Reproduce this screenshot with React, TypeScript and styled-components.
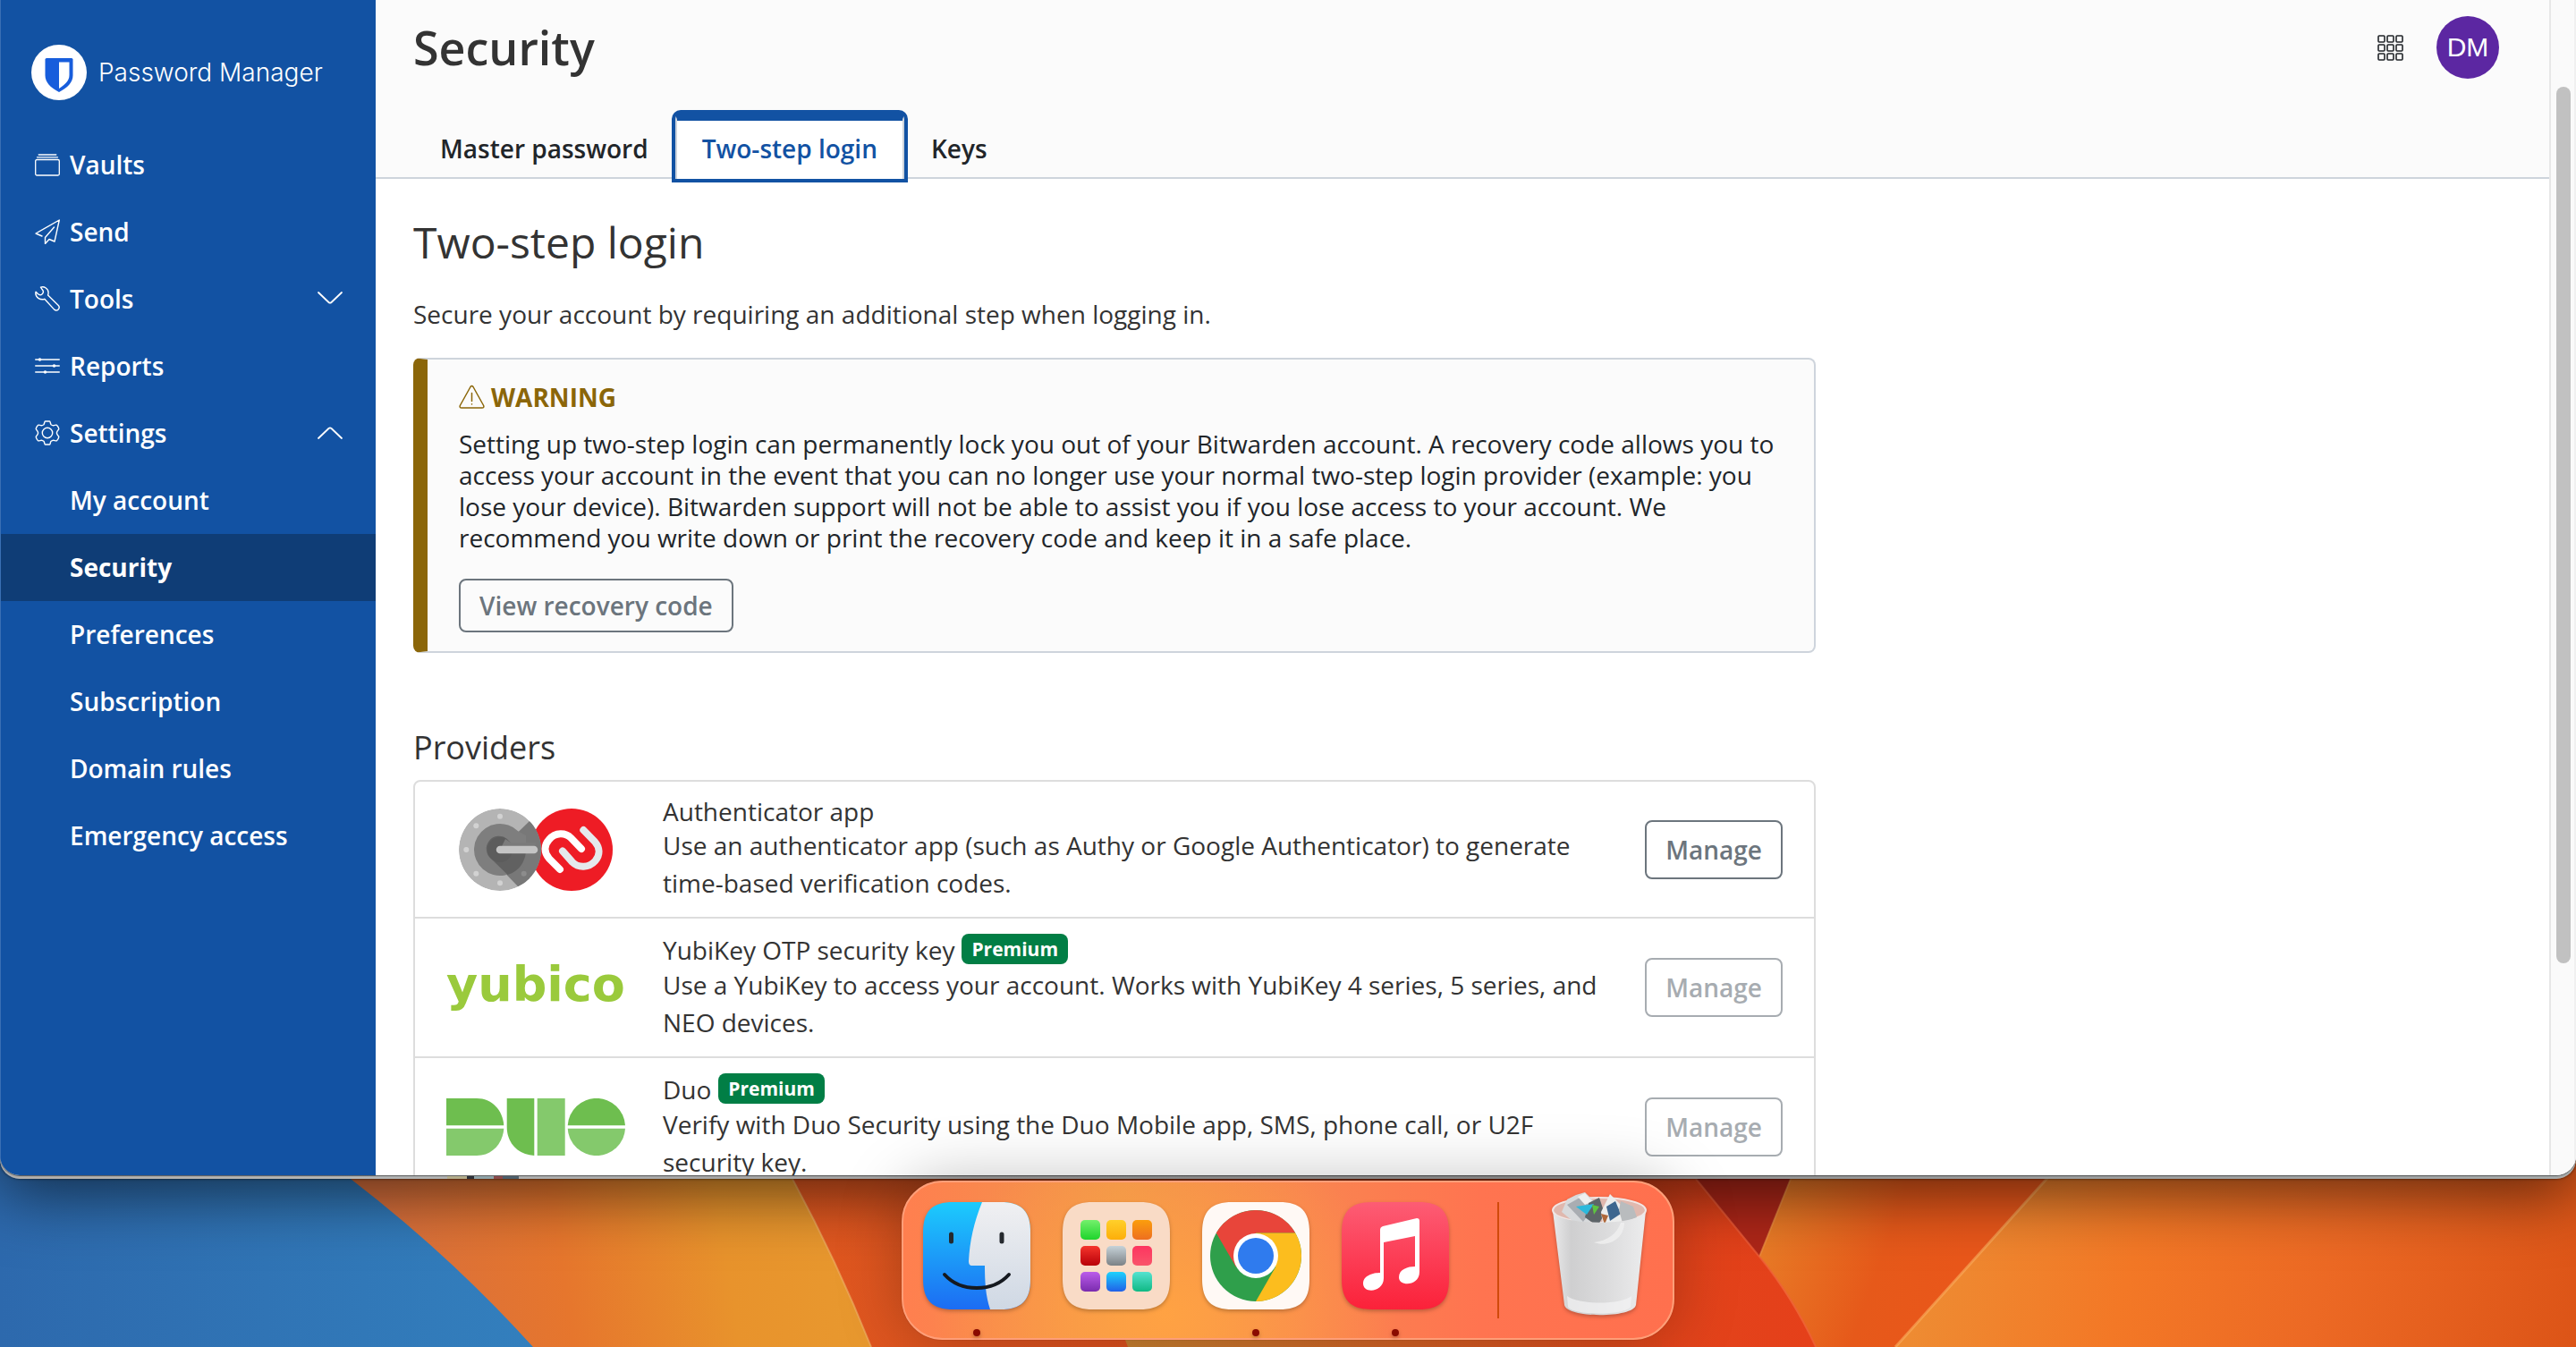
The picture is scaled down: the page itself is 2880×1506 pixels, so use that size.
import React from "react";
import styled, { createGlobalStyle } from "styled-components";

const sans = '"Open Sans", "Noto Sans", sans-serif';
const brand = "#1252a3";
const brandDark = "#0f3d76";
const muted = "#6c757d";
const line = "#ced4dc";

const GlobalStyle = createGlobalStyle`
  *, *::before, *::after { box-sizing: border-box; }
  body { margin: 0; font-family: ${sans}; font-size: 28px; line-height: 42px; color: #333; overflow: hidden; }
  h1, h2, h3, p, ul { margin: 0; padding: 0; font-size: 28px; font-weight: 400; }
  ul { list-style: none; }
  button { font: inherit; color: inherit; background: none; border: 0; margin: 0; padding: 0; }
  a { color: inherit; text-decoration: none; }
  svg { display: block; flex: none; }
`;

/* ---------- desktop ---------- */

const Desktop = styled.div`
  position: relative;
  height: 100vh;
  display: flex;
  flex-direction: column;
  background: #e06024;
  overflow: hidden;
`;

const WallpaperArt = styled.svg`
  position: absolute;
  left: 0;
  bottom: 0;
  width: 100%;
  height: 240px;
`;

const WindowStack = styled.div`
  flex: 1;
  min-height: 0;
  display: flex;
  position: relative;
  padding-bottom: 4px;
  background: linear-gradient(90deg, #b0aeac 0, #b4b6b6 400px, #a2a2a2 1000px, #929292 1900px, #a8acac 100%);
  border-radius: 0 0 22px 22px;
  box-shadow: 0 16px 72px rgba(0, 0, 0, 0.6), 0 0 3px rgba(0, 0, 0, 0.7);
  &::after {
    content: "";
    position: absolute;
    left: 500px;
    bottom: 0;
    width: 80px;
    height: 3px;
    background: linear-gradient(90deg, #b3ad8c 0 22px, #2c3038 22px 30px, #8fa3a8 30px 52px, #8a4a4c 52px 62px, #4d5f6c 62px);
  }
`;

const BrowserWindow = styled.div`
  flex: 1;
  min-width: 0;
  display: flex;
  overflow: hidden;
  background: #fff;
  border-radius: 0 0 22px 22px;
  box-shadow: 0 1px 1px rgba(0, 0, 0, 0.5);
`;

/* ---------- sidebar ---------- */

const Sidebar = styled.nav`
  flex: none;
  width: 420px;
  background: ${brand};
  color: #fff;
  border-left: 1px solid #3a6fb3;
`;

const Brand = styled.a`
  display: flex;
  align-items: center;
  gap: 13px;
  height: 147px;
  padding: 14px 34px 0;
  font-family: Inter, sans-serif;
  font-weight: 300;
  font-size: 28px;
  white-space: nowrap;
`;

const navRow = `
  display: flex;
  align-items: center;
  gap: 11px;
  width: 100%;
  height: 75px;
  font-weight: 600;
  text-align: left;
`;

const NavLink = styled.a`
  ${navRow}
  padding: 0 37px 1px 38px;
`;

const NavToggle = styled.button`
  ${navRow}
  padding: 0 37px 1px 38px;
`;

const NavLabel = styled.span`
  flex: 1;
`;

const SubLink = styled.a<{ $active?: boolean }>`
  ${navRow}
  padding: 0 0 1px 77px;
  font-weight: ${(p) => (p.$active ? 700 : 600)};
  background: ${(p) => (p.$active ? brandDark : "transparent")};
`;

/* ---------- main column ---------- */

const Main = styled.main`
  flex: 1;
  min-width: 0;
  overflow: hidden;
`;

const Header = styled.header`
  background: #fbfbfb;
  border-bottom: 2px solid ${line};
  padding: 18px 56px 0 42px;
`;

const TitleRow = styled.div`
  display: flex;
  align-items: center;
  height: 70px;
`;

const PageTitle = styled.h1`
  flex: 1;
  font-weight: 600;
  font-size: 52px;
  line-height: 70px;
`;

const AppsButton = styled.button`
  margin-right: 37px;
`;

const Avatar = styled.button`
  width: 70px;
  height: 70px;
  border-radius: 50%;
  background: #5c27a2;
  color: #fff;
  font-family: "Liberation Sans", Arial, sans-serif;
  font-size: 30px;
`;

const Tabs = styled.div`
  display: flex;
  margin: 39px 0 -2px;
`;

const Tab = styled.a<{ $active?: boolean }>`
  height: 73px;
  padding: 10px 28px 0;
  border: 2px solid transparent;
  border-top: 8px solid transparent;
  border-bottom: 0;
  border-radius: 6px 6px 0 0;
  font-weight: 600;
  color: #212529;
  ${(p) =>
    p.$active &&
    `
    color: ${brand};
    background: #fff;
    border-color: ${brand} ${line};
    box-shadow: 0 0 0 4px ${brand};
  `}
`;

const Content = styled.div`
  padding: 36px 42px;
  max-width: 1652px;
`;

const SectionTitle = styled.h2`
  font-size: 48px;
  line-height: 70px;
`;

const Lead = styled.p`
  margin-top: 24px;
`;

const Callout = styled.section`
  margin-top: 28px;
  padding: 22px 35px 21px;
  background: #fbfbfb;
  color: #212529;
  border: 2px solid ${line};
  border-left: 16px solid #8b6609;
  border-radius: 8px;
`;

const CalloutTitle = styled.h3`
  display: flex;
  align-items: center;
  gap: 7px;
  font-weight: 700;
  line-height: 40px;
  color: #8b6609;
`;

const CalloutText = styled.p`
  margin: 15px 0 28px;
  line-height: 35px;
`;

const OutlineButton = styled.button<{ $tall?: boolean }>`
  height: ${(p) => (p.$tall ? 66 : 60)}px;
  padding: 0 21px;
  border: 2px solid ${muted};
  border-radius: 8px;
  color: ${muted};
  font-weight: 600;
  white-space: nowrap;
  &:disabled {
    color: #a7acb1;
    border-color: #a7acb1;
  }
`;

const ProvidersTitle = styled.h2`
  margin-top: 80px;
  font-size: 36px;
  line-height: 52px;
`;

const ProviderList = styled.ul`
  margin-top: 10px;
  border: 2px solid #ddd;
  border-radius: 8px;
`;

const Provider = styled.li`
  display: flex;
  align-items: center;
  padding: 17px 35px;
  & + & {
    border-top: 2px solid #ddd;
  }
`;

const LogoCell = styled.div`
  flex: none;
  width: 200px;
  display: flex;
  justify-content: center;
`;

const ProviderText = styled.div`
  flex: 1;
  min-width: 0;
  padding: 0 42px;
`;

const ProviderName = styled.h3<{ $badge?: boolean }>`
  display: flex;
  align-items: flex-start;
  gap: 8px;
  line-height: ${(p) => (p.$badge ? 36 : 33)}px;
`;

const Badge = styled.span`
  padding: 0 11px;
  border-radius: 8px;
  background: #017e45;
  color: #fff;
  font-size: 21px;
  line-height: 34px;
  font-weight: 700;
`;

const ScrollTrack = styled.div`
  flex: none;
  width: 30px;
  padding: 97px 0 0 6px;
  border-left: 2px solid #e7e7e7;
  border-right: 2px solid #f0f0f0;
  background: #fafafa;
`;

const ScrollThumb = styled.div`
  width: 16px;
  height: 80.5%;
  border-radius: 8px;
  background: #c1c1c1;
`;

/* ---------- dock ---------- */

const DockArea = styled.footer`
  position: relative;
  flex: none;
  display: flex;
  justify-content: center;
  padding: 2px 0 8px;
`;

const Dock = styled.div`
  display: flex;
  align-items: flex-start;
  gap: 36px;
  height: 178px;
  padding: 22px;
  border: 2px solid #ff9e78;
  border-radius: 46px;
  background:
    radial-gradient(ellipse 260px 210px at 34% 85%, #ffa243, rgba(255, 162, 67, 0)),
    linear-gradient(90deg, #ff7f4f 0, #f0974a 28%, #f98550 52%, #ff7450 75%, #ff704e 100%);
  box-shadow: 0 0 70px rgba(0, 0, 0, 0.26), 0 0 1px rgba(0, 0, 0, 0.5);
`;

const DockItem = styled.button<{ $running?: boolean }>`
  position: relative;
  width: 120px;
  height: 120px;
  filter: drop-shadow(0 2px 2px rgba(0, 0, 0, 0.25));
  &::after {
    content: "";
    display: ${(p) => (p.$running ? "block" : "none")};
    position: absolute;
    left: 56px;
    top: 142px;
    width: 8px;
    height: 8px;
    border-radius: 50%;
    background: #8a0a00;
  }
`;

const DockDivider = styled.div`
  width: 2px;
  height: 130px;
  margin: 0 16px 0 18px;
  background: #d04a0c;
`;

/* ---------- drawings ---------- */

const thin = { fill: "none", stroke: "currentColor", strokeLinecap: "round", strokeLinejoin: "round" } as const;

const ShieldLogo = () => (
  <svg width="62" height="62" viewBox="0 0 62 62">
    <circle cx="31" cy="31" r="31" fill="#fff" />
    <path d="M17 15h28a1.500 1.500 0 0 1 1.500 1.500V34c0 8-6 14-15.500 19C21.500 48 15.500 42 15.500 34V16.500A1.500 1.500 0 0 1 17 15z" fill="#175ddc" />
    <path d="M31 19.500h11.500V34c0 6-4.500 10.500-11.500 15z" fill="#fff" />
  </svg>
);

const VaultIcon = () => (
  <svg width="28" height="28" viewBox="0 0 28 28" {...thin} strokeWidth="1.300">
    <rect x="0.700" y="8.500" width="26.600" height="17.500" rx="1.500" />
    <path d="M2.500 5.800h23M4.200 3h19.600" />
  </svg>
);

const SendIcon = () => (
  <svg width="28" height="28" viewBox="0 0 28 28" {...thin} strokeWidth="1.400">
    <path d="M8 19 1 16 27.300 1 22 25l-6-2.500-4.500 5v-7L21.500 9" />
  </svg>
);

const WrenchIcon = () => (
  <svg width="28" height="28" viewBox="0 0 28 28" {...thin} strokeWidth="1.400">
    <path d="M6.500 1.200c4-1.400 8.600 1.600 8.600 6 0 1.300-.3 2-.5 2.800L26.300 21.500c2.500 3-1.300 7.200-4.600 4.600L10.800 14.300c-4.500 1.700-9.800-1.600-10-6.400 0-.8.100-1 .3-1.600l2.200 2.300c3.400 3.200 8-1.200 5-4.800z" />
  </svg>
);

const SlidersIcon = () => (
  <svg width="28" height="28" viewBox="0 0 28 28" {...thin} strokeWidth="1.300">
    <path d="M.7 7h26.600M.7 14h26.600M.7 21h26.600" />
    <g fill="currentColor" stroke="none">
      <circle cx="5.500" cy="7" r="1.800" />
      <circle cx="21.500" cy="14" r="1.800" />
      <circle cx="11.500" cy="21" r="1.800" />
    </g>
  </svg>
);

const GearIcon = () => (
  <svg width="28" height="28" viewBox="0 0 28 28" {...thin} strokeWidth="1.400">
    <circle cx="14" cy="14" r="5.700" />
    <path d="M11.500 1h5c.8 0 .8 3 1.600 3.700 1.200.9 1.600 1 2.600 1.100 1 .1 3-1.200 3.700-.6.700.700 2.200 3.300 2.400 4.200.2 1-2.300 2-2.400 4.600.1 2.600 2.600 3.600 2.400 4.600-.2.900-1.700 3.500-2.400 4.200-.7.600-2.700-.7-3.700-.6-1 .100-1.400.2-2.600 1.100-.8.700-.8 3.700-1.600 3.700h-5c-.8 0-.8-3-1.600-3.700-1.200-.9-1.600-1-2.600-1.100-1-.1-3 1.200-3.700.6C2.900 22.100 1.400 19.500 1.200 18.600 1 17.600 3.500 16.600 3.600 14 3.500 11.400 1 10.400 1.200 9.400c.2-.9 1.700-3.500 2.400-4.200.7-.6 2.700.7 3.700.6 1-.1 1.400-.2 2.600-1.100C10.700 4 10.700 1 11.500 1z" />
  </svg>
);

const Chevron = ({ up }: { up?: boolean }) => (
  <svg width="28" height="28" viewBox="0 0 28 28" {...thin} strokeWidth="1.800">
    <path d={up ? "M1 20 12.500 9q1.500-1.300 3 0L27 20" : "M1 7 12.500 18q1.500 1.300 3 0L27 7"} />
  </svg>
);

const WarningIcon = () => (
  <svg width="29" height="28" viewBox="0 0 29 28" {...thin} strokeWidth="1.500">
    <path d="M13 2.500q1.500-2.200 3 0L27.700 23.500q.8 2.500-1.700 2.500H3Q.5 26 1.300 23.500z" />
    <path d="M14.500 9.500v9M14.500 21.700v.4" />
  </svg>
);

const AppsIcon = () => (
  <svg width="29" height="29" viewBox="0 0 29 29" fill="none" stroke="#212529" strokeWidth="1.600">
    {[0, 10, 20].map((y) => [0, 10, 20].map((x) => <rect key={`${x}-${y}`} x={x + 1} y={y + 1} width="7" height="7" rx="1" />))}
  </svg>
);

const AuthLogo = () => (
  <svg width="172" height="92" viewBox="0 0 172 92">
    <defs>
      <clipPath id="dial"><circle cx="46" cy="46" r="46" /></clipPath>
    </defs>
    <circle cx="126" cy="46" r="46" fill="#ee1c25" />
    <g fill="none" strokeWidth="8" strokeLinecap="round" strokeLinejoin="round">
      <path d="M139.300 24 152 37c6 7 6 15 .5 21.500-7 8-19 8-25.500 1.500L116 47.500" stroke="#e5e9ec" />
      <path d="M113 68 101 56c-6-7-6-15 0-21.500 7-8 18-8 24.500-1.500L137 45" stroke="#fff" />
    </g>
    <g clipPath="url(#dial)">
      <circle cx="46" cy="46" r="46" fill="#b4b4b4" />
      <path d="M46 46 79 14l15 10v50L66 87z" fill="#787878" />
      <path d="M36 56 66 87 79 78 62 48z" fill="#787878" />
      <path d="M66.500 25.500A29 29 0 1 0 75 46V30z" fill="#7e7e7e" />
      <path d="M54 34a14 14 0 1 0-18 22l18.500 18C66 71 75 60 75 46H50z" fill="#616161" />
      <circle cx="46" cy="46" r="14" fill="#5c5c5c" />
      <path d="M46 46h40v-8H58L52 34z" fill="#7b7b7b" />
    </g>
    <g fill="#d2d2d2">
      <circle cx="46" cy="8.700" r="3" />
      <circle cx="19.300" cy="19.300" r="3" />
      <circle cx="8.300" cy="46" r="3" />
      <circle cx="19.300" cy="72.700" r="3" />
      <circle cx="46" cy="83.300" r="3" />
    </g>
    <circle cx="72.700" cy="72.700" r="3" fill="#8c8c8c" />
    <path d="M46 46h38" stroke="#c4c4c4" strokeWidth="8.500" strokeLinecap="round" />
  </svg>
);

const YubicoLogo = () => (
  <svg width="204" height="72" viewBox="0 0 204 72">
    <text x="102" y="51" textAnchor="middle" fontFamily='"DejaVu Sans", sans-serif' fontWeight="700" fontSize="54" fill="#9aca3c">
      yubico
    </text>
  </svg>
);

const DuoLogo = () => (
  <svg width="200" height="64" viewBox="0 0 200 64">
    <g fill="#6ebe4f">
      <path d="M0 0h34c17 0 29 13 30.300 30.300H0z" />
      <path d="M67.700 0h30.600v64C80 63 67.700 50 67.700 32z" />
      <path d="M135.700 30.300a32.200 32.200 0 0 1 64.300 0z" />
    </g>
    <g fill="#84c96c">
      <path d="M0 33.700h64.300C63 51 51 64 34 64H0z" />
      <path d="M101.700 0h31v64h-31z" />
      <path d="M135.700 33.700a32.200 32.200 0 0 0 64.300 0z" />
    </g>
  </svg>
);

const Wallpaper = () => (
  <WallpaperArt viewBox="0 0 2880 240" preserveAspectRatio="none" aria-hidden="true">
    <defs>
      <linearGradient id="wBlue" x1="0" x2="1"><stop offset="0" stopColor="#2d69ad" /><stop offset="1" stopColor="#337fbd" /></linearGradient>
      <linearGradient id="wGold" gradientUnits="userSpaceOnUse" x1="440" y1="140" x2="960" y2="60"><stop offset="0" stopColor="#d9703c" /><stop offset=".35" stopColor="#e6762d" /><stop offset=".7" stopColor="#e8932c" /><stop offset="1" stopColor="#e8992f" /></linearGradient>
      <linearGradient id="wRed" gradientUnits="userSpaceOnUse" x1="880" y1="0" x2="2030" y2="0"><stop offset="0" stopColor="#e05820" /><stop offset=".6" stopColor="#dc4a1c" /><stop offset="1" stopColor="#e5401a" /></linearGradient>
      <linearGradient id="wMid" gradientUnits="userSpaceOnUse" x1="1990" y1="80" x2="2190" y2="150"><stop offset="0" stopColor="#e87a26" /><stop offset=".6" stopColor="#e6591a" /><stop offset="1" stopColor="#e9571a" /></linearGradient>
      <linearGradient id="wRight" gradientUnits="userSpaceOnUse" x1="2180" y1="60" x2="2880" y2="240"><stop offset="0" stopColor="#ee8b32" /><stop offset=".3" stopColor="#f37826" /><stop offset=".6" stopColor="#ec6924" /><stop offset="1" stopColor="#dc5417" /></linearGradient>
      <linearGradient id="wStrip" x1="0" x2="1"><stop offset="0" stopColor="#c88030" /><stop offset="1" stopColor="#de451a" /></linearGradient>
    </defs>
    <rect width="2880" height="240" fill="url(#wRed)" />
    <path d="M1258 232h600v8h-597z" fill="url(#wStrip)" />
    <path d="M0 0h860l26 52q50 93 88 188H0z" fill="url(#wGold)" />
    <path d="M886 52q50 93 88 188" fill="none" stroke="#efb46a" strokeWidth="2" opacity=".6" />
    <path d="M0 0h325l67 52q113 87 204 188H0z" fill="url(#wBlue)" />
    <path d="M1854 0h169L1967 139 1896 52z" fill="#ad2618" />
    <path d="M2023 0h400L2119 240h-89Q2000 180 1967 139z" fill="url(#wMid)" />
    <path d="M2002 52 1967 139" stroke="#ee9a4a" strokeWidth="2" opacity=".6" />
    <path d="M1896 52 1967 139Q2005 185 2030 240" fill="none" stroke="#f0603a" strokeWidth="2" opacity=".7" />
    <path d="M2335 0h545v240h-761z" fill="url(#wRight)" />
    <path d="M2335 0 2119 240" stroke="#fbb060" strokeWidth="3" opacity=".6" />
  </WallpaperArt>
);

const tile = "M34 0h52c24 0 34 10 34 34v52c0 24-10 34-34 34H34C10 120 0 110 0 86V34C0 10 10 0 34 0z";

const FinderIcon = () => (
  <svg width="120" height="120" viewBox="0 0 120 120">
    <defs>
      <linearGradient id="fBlue" x2="0" y2="1"><stop offset="0" stopColor="#1ccbfd" /><stop offset="1" stopColor="#1c6cf3" /></linearGradient>
      <linearGradient id="fGrey" x2="0" y2="1"><stop offset="0" stopColor="#f0f0f2" /><stop offset="1" stopColor="#cfd8e4" /></linearGradient>
      <clipPath id="fTile"><path d={tile} /></clipPath>
    </defs>
    <g clipPath="url(#fTile)">
      <path d="M0 0h120v120H0z" fill="url(#fBlue)" />
      <path d="M66 0C57 22 52 44 51 66c0 3 1 5 4 5h14c0 18 1 34 6 49h45V0z" fill="url(#fGrey)" />
    </g>
    <path d="M31.500 36v8M88 36v8" stroke="#25292e" strokeWidth="5" strokeLinecap="round" />
    <path d="M24 81c18 20 54 20 72 0" fill="none" stroke="#15191f" strokeWidth="4" strokeLinecap="round" />
  </svg>
);

const padColors = [
  ["#74f06c", "#1ed42c"], ["#ffd02a", "#fdae0a"], ["#fb9e0c", "#ee6f20"],
  ["#f5352c", "#b80008"], ["#c6d2d8", "#7c8286"], ["#fd3560", "#f9546a"],
  ["#bb5cea", "#7a2cae"], ["#1ed2fc", "#2060e8"], ["#56e2d0", "#10b984"],
];

const LaunchpadIcon = () => (
  <svg width="120" height="120" viewBox="0 0 120 120">
    <defs>
      {padColors.map(([a, b], i) => (
        <linearGradient id={`pad${i}`} key={i} x2="0" y2="1"><stop offset="0" stopColor={a} /><stop offset="1" stopColor={b} /></linearGradient>
      ))}
    </defs>
    <path d={tile} fill="#f9dbc6" />
    {padColors.map((_, i) => (
      <rect key={i} x={20 + (i % 3) * 29} y={20 + Math.floor(i / 3) * 29} width="22" height="22" rx="5" fill={`url(#pad${i})`} />
    ))}
  </svg>
);

const ChromeIcon = () => (
  <svg width="120" height="120" viewBox="0 0 120 120">
    <path d={tile} fill="#fff9f5" />
    <g transform="translate(60 60)">
      <circle r="51" fill="#2f9f4b" />
      <path d="M-44.200-25.500A51 51 0 0 1 44.200-25.500H0L-22 12.700z" fill="#e8453a" />
      <path d="M44.200-25.500A51 51 0 0 1 0 51L22 12.700 0-25.500z" fill="#fcbd1e" />
      <circle r="25" fill="#fff" />
      <circle r="20" fill="#2f7bee" />
    </g>
  </svg>
);

const MusicIcon = () => (
  <svg width="120" height="120" viewBox="0 0 120 120">
    <defs>
      <linearGradient id="mRed" x2="0" y2="1"><stop offset="0" stopColor="#fd5c74" /><stop offset="1" stopColor="#fb2139" /></linearGradient>
    </defs>
    <path d={tile} fill="url(#mRed)" />
    <path d="M46 27q-3 1-3 4v48c-8 0-19 3-19 12 0 12 23 10 23-6V45l35-7v34c-8 0-18 3-18 12 0 11 23 10 23-6V21q0-3-3-3z" fill="#fff" />
  </svg>
);

const TrashIcon = () => (
  <svg width="120" height="120" viewBox="0 11 120 120" overflow="visible">
    <defs>
      <linearGradient id="tBody" x2="1" y2="0"><stop offset="0" stopColor="#e9e9ea" /><stop offset=".2" stopColor="#cfcfd0" /><stop offset=".6" stopColor="#dcdcdd" /><stop offset="1" stopColor="#ececed" /></linearGradient>
    </defs>
    <ellipse cx="60" cy="20" rx="52" ry="14" fill="#e0b8ae" stroke="#f2e6e4" strokeWidth="2" />
    <path d="M18 22 24 8l10-5 10-3 10 10-4 26-20-4z" fill="#d8dadc" />
    <path d="M24 14 40 5l12 14-10 14z" fill="#a9adb2" />
    <path d="M36 5l8-4 8 9-8 4z" fill="#eff0f0" />
    <path d="M48 12l12-6 6 18-8 14-14-10z" fill="#5d6468" />
    <path d="M62 22 72 2l18 18-6 14-20 2z" fill="#eceded" />
    <path d="M68 16l10-6 6 14-12 8z" fill="#3d668f" />
    <path d="M84 10l14 6 4 12-16 6-4-14z" fill="#b9bcbe" />
    <path d="M34 16l20-3-8 12z" fill="#2cb9dc" />
    <path d="M52 14l8 2-6 9z" fill="#5fc440" />
    <path d="M62 24l8 2-4 10z" fill="#b0683a" />
    <path d="M8 21c4 17 100 17 104 0l-11 105c-3 15-77 15-80 0z" fill="url(#tBody)" />
    <path d="M84 34c-4 12-14 20-30 22 16 6 34-4 34-22z" fill="#f0f0f0" opacity=".8" />
    <path d="M24 116c14 10 60 10 72 0l-1 12c-6 10-66 10-70 0z" fill="#f4f4f5" opacity=".7" />
  </svg>
);

/* ---------- page ---------- */

const providers = [
  { name: "Authenticator app", text: "Use an authenticator app (such as Authy or Google Authenticator) to generate time-based verification codes.", premium: false, Logo: AuthLogo },
  { name: "YubiKey OTP security key", text: "Use a YubiKey to access your account. Works with YubiKey 4 series, 5 series, and NEO devices.", premium: true, Logo: YubicoLogo },
  { name: "Duo", text: "Verify with Duo Security using the Duo Mobile app, SMS, phone call, or U2F security key.", premium: true, Logo: DuoLogo },
];

const settingsPages = ["My account", "Security", "Preferences", "Subscription", "Domain rules", "Emergency access"];

export default function App() {
  return (
    <Desktop>
      <GlobalStyle />
      <Wallpaper />
      <WindowStack>
        <BrowserWindow>
          <Sidebar aria-label="Main">
            <Brand href="#home"><ShieldLogo />Password Manager</Brand>
            <NavLink href="#vaults"><VaultIcon /><NavLabel>Vaults</NavLabel></NavLink>
            <NavLink href="#send"><SendIcon /><NavLabel>Send</NavLabel></NavLink>
            <NavToggle aria-expanded={false}><WrenchIcon /><NavLabel>Tools</NavLabel><Chevron /></NavToggle>
            <NavLink href="#reports"><SlidersIcon /><NavLabel>Reports</NavLabel></NavLink>
            <NavToggle aria-expanded={true}><GearIcon /><NavLabel>Settings</NavLabel><Chevron up /></NavToggle>
            {settingsPages.map((label) => (
              <SubLink key={label} href="#settings" $active={label === "Security"}>{label}</SubLink>
            ))}
          </Sidebar>
          <Main>
            <Header>
              <TitleRow>
                <PageTitle>Security</PageTitle>
                <AppsButton aria-label="Switch products"><AppsIcon /></AppsButton>
                <Avatar>DM</Avatar>
              </TitleRow>
              <Tabs>
                <Tab href="#password">Master password</Tab>
                <Tab href="#two-step" $active aria-current="page">Two-step login</Tab>
                <Tab href="#keys">Keys</Tab>
              </Tabs>
            </Header>
            <Content>
              <SectionTitle>Two-step login</SectionTitle>
              <Lead>Secure your account by requiring an additional step when logging in.</Lead>
              <Callout>
                <CalloutTitle><WarningIcon />WARNING</CalloutTitle>
                <CalloutText>
                  Setting up two-step login can permanently lock you out of your Bitwarden account. A recovery code allows you to
                  access your account in the event that you can no longer use your normal two-step login provider (example: you
                  lose your device). Bitwarden support will not be able to assist you if you lose access to your account. We
                  recommend you write down or print the recovery code and keep it in a safe place.
                </CalloutText>
                <OutlineButton>View recovery code</OutlineButton>
              </Callout>
              <ProvidersTitle>Providers</ProvidersTitle>
              <ProviderList>
                {providers.map(({ name, text, premium, Logo }) => (
                  <Provider key={name}>
                    <LogoCell><Logo /></LogoCell>
                    <ProviderText>
                      <ProviderName $badge={premium}>{name}{premium && <Badge>Premium</Badge>}</ProviderName>
                      <p>{text}</p>
                    </ProviderText>
                    <OutlineButton $tall disabled={premium}>Manage</OutlineButton>
                  </Provider>
                ))}
              </ProviderList>
            </Content>
          </Main>
          <ScrollTrack><ScrollThumb /></ScrollTrack>
        </BrowserWindow>
      </WindowStack>
      <DockArea>
        <Dock>
          <DockItem $running aria-label="Finder"><FinderIcon /></DockItem>
          <DockItem aria-label="Launchpad"><LaunchpadIcon /></DockItem>
          <DockItem $running aria-label="Chrome"><ChromeIcon /></DockItem>
          <DockItem $running aria-label="Music"><MusicIcon /></DockItem>
          <DockDivider />
          <DockItem aria-label="Trash"><TrashIcon /></DockItem>
        </Dock>
      </DockArea>
    </Desktop>
  );
}
